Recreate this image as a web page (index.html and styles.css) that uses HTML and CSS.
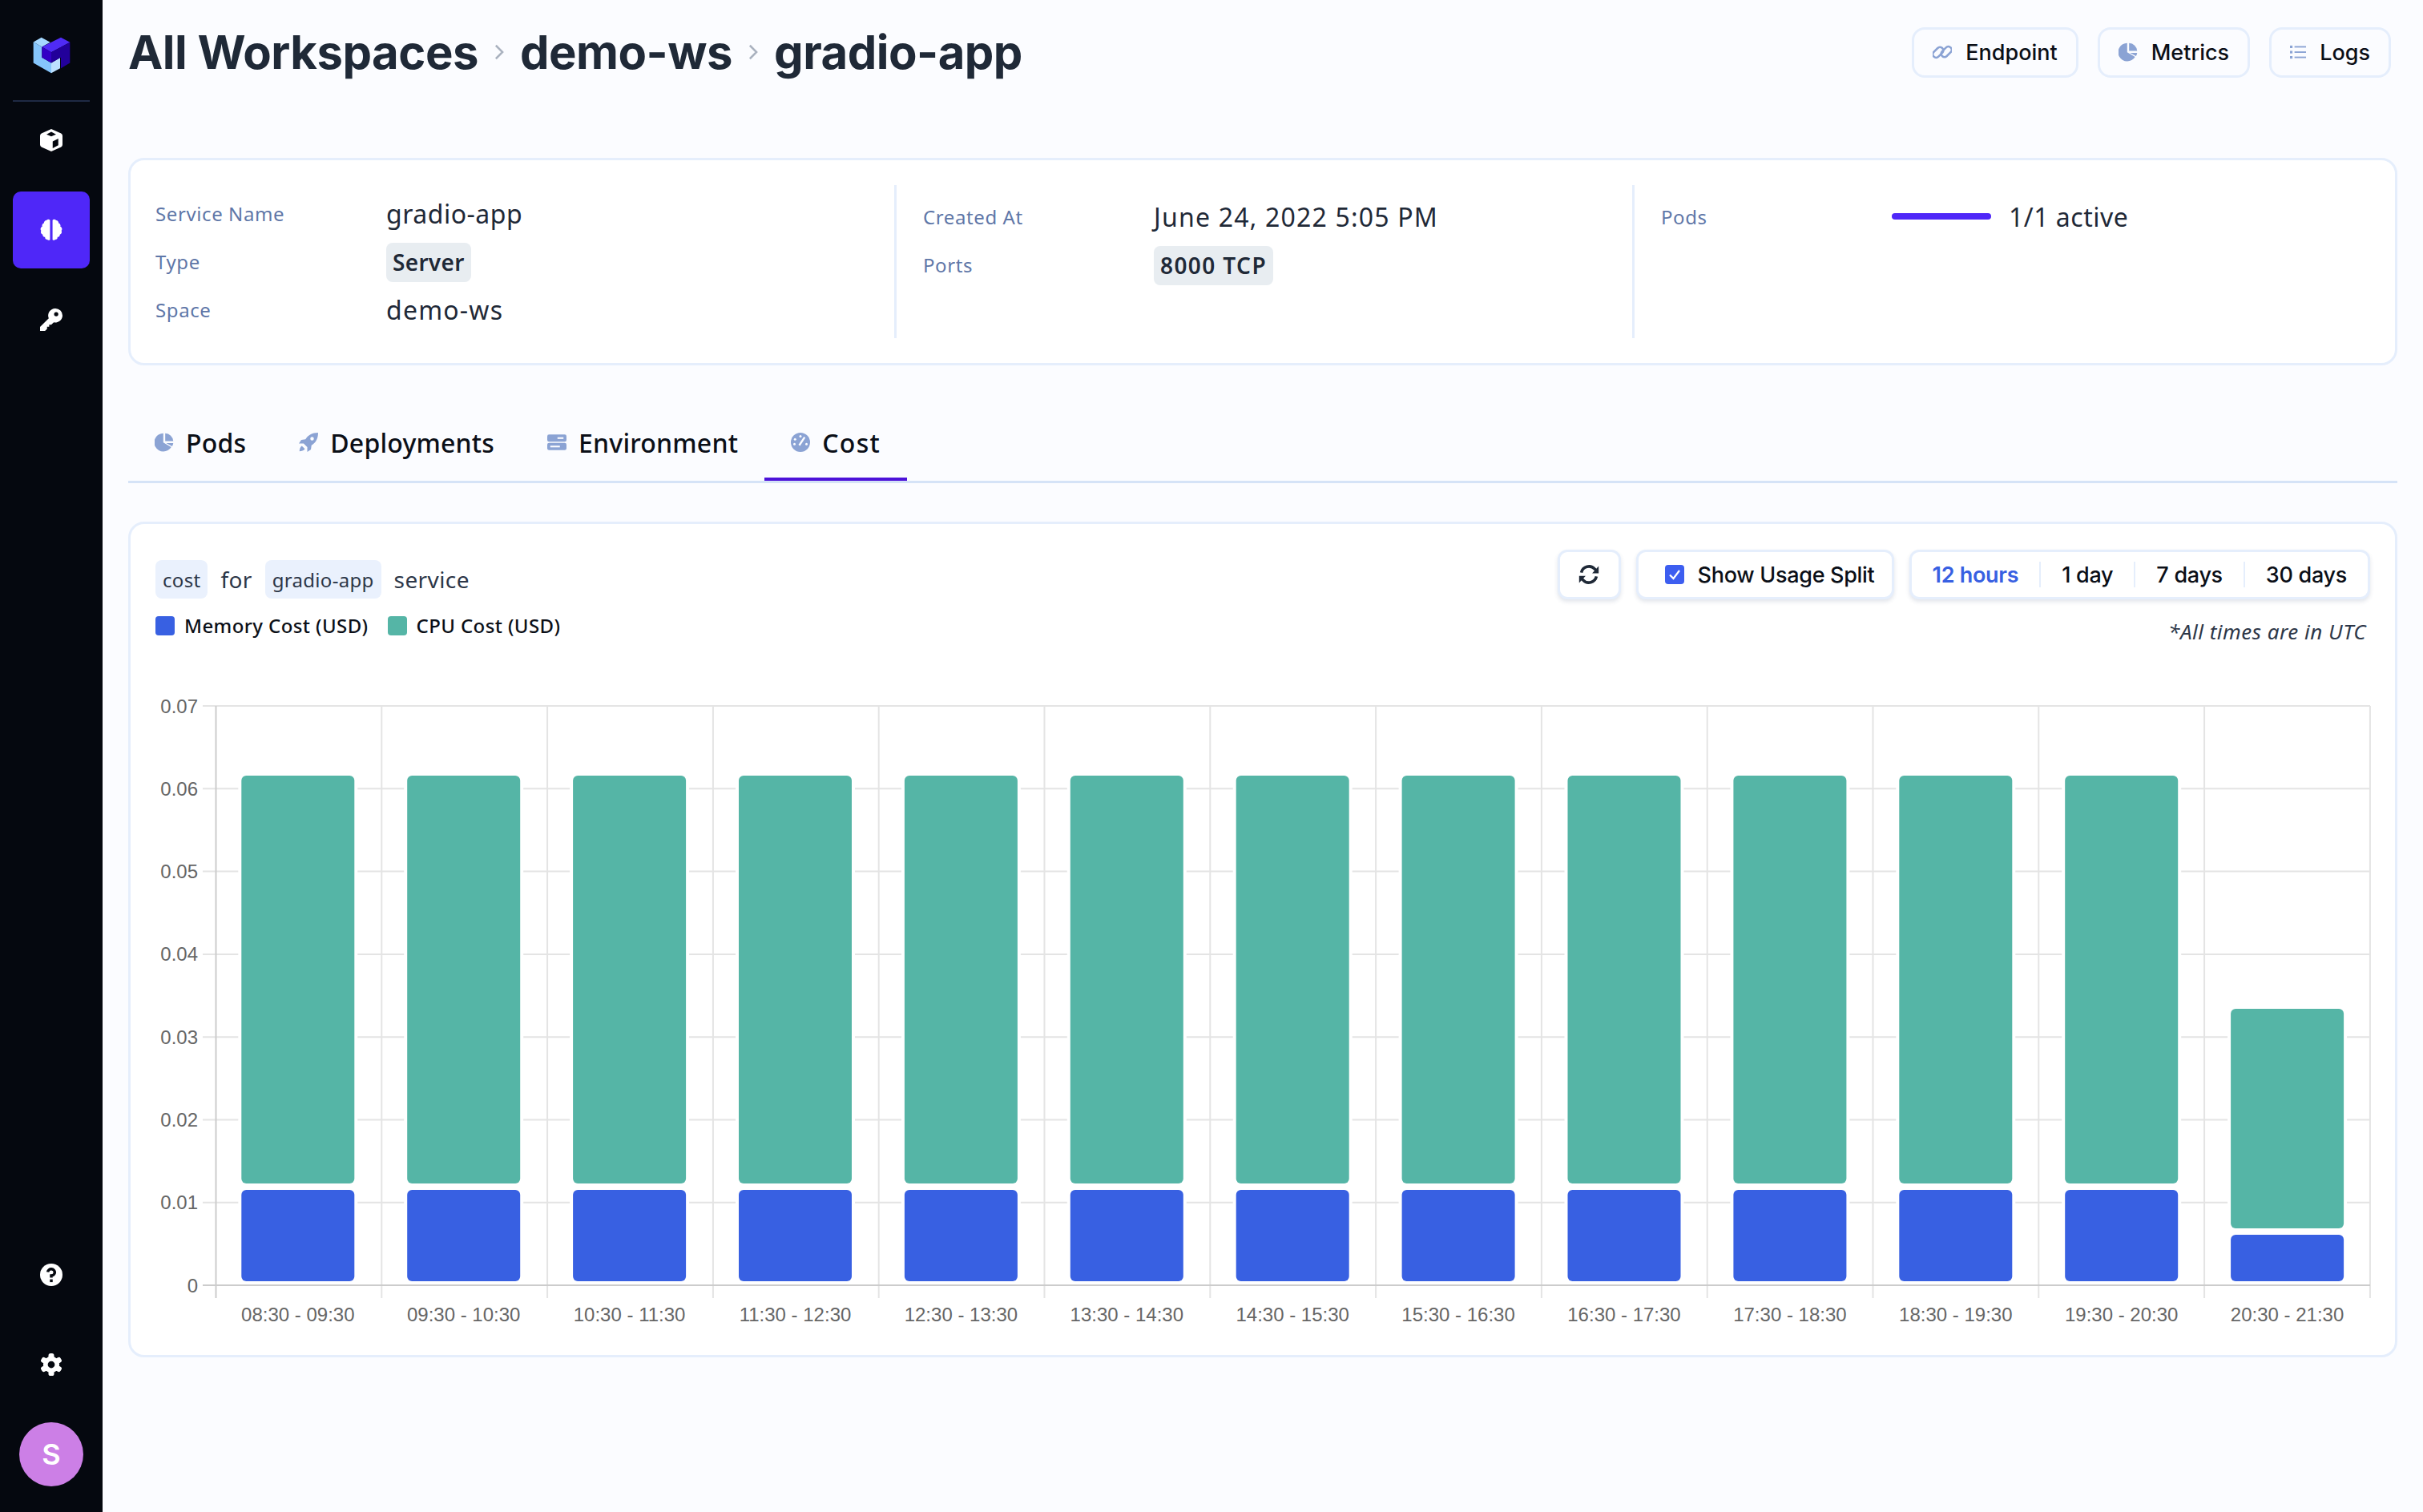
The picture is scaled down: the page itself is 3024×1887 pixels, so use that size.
FILE: index.html
```html
<!DOCTYPE html>
<html lang="en">
<head>
    <meta charset="UTF-8">
    <meta name="viewport" content="width=device-width, initial-scale=1.0">
    <title>gradio-app</title>
    <link rel="stylesheet" href="styles.css">
</head>
<body>
    <nav class="sidebar">
        <div class="logo">
            <svg viewBox="120 135 147 143" width="49" height="48">
                <polygon fill="#a5d8ff" points="125,157 155,140 188,158 157,175"/>
                <polygon fill="#85c5fb" points="125,157 157,175 157,215 192,235 192,273 125,235"/>
                <polygon fill="#bde0ff" points="192,235 225,215 225,255 192,273"/>
                <polygon fill="#4f2bf5" points="157,175 228,140 262,158 192,195"/>
                <polygon fill="#3300c5" points="157,175 192,195 192,235 157,215"/>
                <polygon fill="#22009a" points="192,195 262,158 262,235 228,255 228,215 192,235"/>
            </svg>
        </div>
        <a class="side-item">
            <svg viewBox="0 0 16 16" class="side-icon"><path fill="#fff" fill-rule="evenodd" d="M8 0 15 3.2Q16 3.700 16 4.800V11.200Q16 12.300 15 12.800L8 16 1 12.800Q0 12.300 0 11.200V4.800Q0 3.700 1 3.200ZM8 2 4.600 3.800 8 5.300 11.400 3.800ZM9 8.800V13.700L13 11.600V6.800Z"/></svg>
        </a>
        <a class="side-item active">
            <svg viewBox="0 0 16 16" class="side-icon">
                <path id="half" fill="#fff" d="M7.100 1A1.600 1.600 0 0 0 4.500 1.200 1.700 1.700 0 0 0 2.800 3.200 1.700 1.700 0 0 0 1.600 5.600 1.900 1.900 0 0 0 .8 8.600 1.800 1.800 0 0 0 1.800 11.200 1.700 1.700 0 0 0 3.600 13 1.600 1.600 0 0 0 5.200 14.800 1.400 1.400 0 0 0 7.100 15Z"/>
                <use href="#half" transform="matrix(-1 0 0 1 16 0)"/>
            </svg>
        </a>
        <a class="side-item">
            <svg viewBox="0 0 16 16" class="side-icon"><path fill="#fff" fill-rule="evenodd" d="M11 0A5 5 0 0 1 16 5 5 5 0 0 1 9.800 9.800L8 11.600H6.500V13H5V14.500L3.500 16H0V13.200L6.200 7A5 5 0 0 1 11 0ZM11.500 2.500A1.500 1.500 0 1 0 11.501 5.500 1.500 1.500 0 0 0 11.500 2.500Z"/></svg>
        </a>
        <div class="side-spacer"></div>
        <a class="side-item">
            <svg viewBox="0 0 16 16" class="side-icon">
                <circle cx="8" cy="8" r="8" fill="#fff"/>
                <path d="M5.500 6A2.500 2.300 0 1 1 8 8.500V10" fill="none" stroke="#05080f" stroke-width="2"/>
                <rect x="7" y="11.200" width="2" height="2" fill="#05080f"/>
            </svg>
        </a>
        <a class="side-item">
            <svg viewBox="0 0 16 16" class="side-icon">
                <g fill="#fff">
                    <circle cx="8" cy="8" r="5.800"/>
                    <rect x="6" y="0" width="4" height="16" rx="1.500"/>
                    <rect x="6" y="0" width="4" height="16" rx="1.500" transform="rotate(60 8 8)"/>
                    <rect x="6" y="0" width="4" height="16" rx="1.500" transform="rotate(120 8 8)"/>
                </g>
                <circle cx="8" cy="8" r="2.500" fill="#05080f"/>
            </svg>
        </a>
        <div class="avatar">S</div>
    </nav>

    <main class="main">
        <header class="topbar">
            <h1 class="crumbs">
                <span>All Workspaces</span>
                <svg class="chevron" viewBox="0 0 10 16"><path d="M2 2 8 8 2 14" fill="none" stroke="#aab2bf" stroke-width="1.800"/></svg>
                <span>demo-ws</span>
                <svg class="chevron" viewBox="0 0 10 16"><path d="M2 2 8 8 2 14" fill="none" stroke="#aab2bf" stroke-width="1.800"/></svg>
                <span>gradio-app</span>
            </h1>
            <div class="top-actions">
                <a class="top-btn">
                    <svg class="icon" viewBox="0 0 16 16"><g fill="none" stroke="#8ba3d4" stroke-width="1.700"><rect x="-.5" y="5.500" width="10" height="5.500" rx="2.700" transform="rotate(-45 4.500 8.200)"/><rect x="6.500" y="5" width="10" height="5.500" rx="2.700" transform="rotate(-45 11.500 7.800)"/></g></svg>
                    Endpoint
                </a>
                <a class="top-btn">
                    <svg class="icon" viewBox="0 0 16 16"><g fill="#8ba3d4"><path d="M7.200.5A7.600 7.600 0 1 0 13.800 12L7.200 8.200Z"/><path d="M8.800.5A7 7 0 0 1 15.500 7H8.800Z"/><path d="M9.600 8.600H15.500A7.500 7.500 0 0 1 14.600 11.300Z"/></g></svg>
                    Metrics
                </a>
                <a class="top-btn">
                    <svg class="icon icon-small" viewBox="0 0 16 16"><g fill="#8ba3d4"><rect x="0" y="1.500" width="2.500" height="2.500"/><rect x="0" y="6.800" width="2.500" height="2.500"/><rect x="0" y="12" width="2.500" height="2.500"/><rect x="4.500" y="2" width="11.500" height="1.500"/><rect x="4.500" y="7.300" width="11.500" height="1.500"/><rect x="4.500" y="12.500" width="11.500" height="1.500"/></g></svg>
                    Logs
                </a>
            </div>
        </header>

        <section class="card info-card">
            <div class="info-col first">
                <div class="info-row"><span class="info-label">Service Name</span><span class="info-value">gradio-app</span></div>
                <div class="info-row"><span class="info-label">Type</span><span class="chip">Server</span></div>
                <div class="info-row"><span class="info-label">Space</span><span class="info-value wide">demo-ws</span></div>
            </div>
            <div class="info-col">
                <div class="info-row"><span class="info-label">Created At</span><span class="info-value wide">June 24, 2022 5:05 PM</span></div>
                <div class="info-row"><span class="info-label">Ports</span><span class="chip ports">8000 TCP</span></div>
            </div>
            <div class="info-col">
                <div class="info-row"><span class="info-label">Pods</span><span class="pods-value"><span class="pods-bar"></span><span class="info-value">1/1 active</span></span></div>
            </div>
        </section>

        <div class="tabs">
            <a class="tab">
                <svg class="icon" viewBox="0 0 16 16"><g fill="#8ba3d4"><path d="M7.200.5A7.600 7.600 0 1 0 13.800 12L7.200 8.200Z"/><path d="M8.800.5A7 7 0 0 1 15.500 7H8.800Z"/><path d="M9.600 8.600H15.500A7.500 7.500 0 0 1 14.600 11.300Z"/></g></svg>
                Pods
            </a>
            <a class="tab">
                <svg class="icon" viewBox="0 0 16 16"><path fill="#8ba3d4" fill-rule="evenodd" d="M16 0C11 0 7.500 2.200 5.500 5.500L2 6 0 9H4L7 12V16L10 14 10.500 10.500C14 8.500 16 5 16 0ZM11 3.500A1.500 1.500 0 1 1 10.999 6.500 1.500 1.500 0 0 1 11 3.500ZM2.500 11 5 13.500C4 15 2 15.500 .5 15.500 .5 14 1 12 2.500 11Z"/></svg>
                Deployments
            </a>
            <a class="tab">
                <svg class="icon" viewBox="0 0 16 16"><g fill="#8ba3d4"><rect x="0" y="1.500" width="16" height="6" rx="1.500"/><rect x="0" y="8.500" width="16" height="6" rx="1.500"/></g><rect x="8.500" y="3.800" width="5" height="1.400" fill="#fbfcff"/><rect x="2.500" y="10.800" width="8" height="1.400" fill="#fbfcff"/></svg>
                Environment
            </a>
            <a class="tab current">
                <svg class="icon" viewBox="0 0 16 16"><circle cx="8" cy="8" r="8" fill="#8ba3d4"/><g fill="#fbfcff"><circle cx="8" cy="3" r="1"/><circle cx="3.500" cy="5.500" r="1"/><circle cx="3" cy="9.500" r="1"/><circle cx="13" cy="9.500" r="1"/></g><path d="M7 10.500 11.500 3.800" stroke="#fbfcff" stroke-width="1.600"/></svg>
                Cost
            </a>
        </div>

        <section class="card chart-card">
            <div class="chart-head">
                <div class="chart-title">
                    <div class="title-line"><span class="tag">cost</span><span>for</span><span class="tag">gradio-app</span><span>service</span></div>
                    <div class="legend">
                        <span class="legend-item"><span class="swatch mem"></span>Memory Cost (USD)</span>
                        <span class="legend-item"><span class="swatch cpu"></span>CPU Cost (USD)</span>
                    </div>
                </div>
                <div class="chart-tools">
                    <div class="tool-row">
                        <button class="tool refresh">
                            <svg viewBox="0 0 16 16" width="26" height="26"><g fill="none" stroke="#1f2937" stroke-width="2.200"><path d="M2.200 6.500A6 6 0 0 1 12.500 3.800L14.500 6"/><path d="M13.800 9.500A6 6 0 0 1 3.500 12.200L1.500 10"/></g><g fill="#1f2937"><polygon points="15.500,1.500 15.500,7 10.500,7"/><polygon points=".5,14.500 .5,9 5.500,9"/></g></svg>
                        </button>
                        <label class="tool split">
                            <span class="check"><svg viewBox="0 0 24 24" width="24" height="24"><path d="M6 12.500 10.500 17 18 7" fill="none" stroke="#fff" stroke-width="2.200"/></svg></span>
                            Show Usage Split
                        </label>
                        <div class="tool range">
                            <a class="range-item selected">12 hours</a>
                            <a class="range-item">1 day</a>
                            <a class="range-item">7 days</a>
                            <a class="range-item">30 days</a>
                        </div>
                    </div>
                    <div class="utc-note">*All times are in UTC</div>
                </div>
            </div>

            <svg class="chart" viewBox="194 860 2772 800" width="2772" height="800">
                <g class="grid">
                    <path d="M253 881H2958M253 984.300H2958M253 1087.600H2958M253 1190.900H2958M253 1294.200H2958M253 1397.500H2958M253 1500.800H2958"/>
                    <path d="M476.300 881V1620M683.100 881V1620M889.900 881V1620M1096.700 881V1620M1303.500 881V1620M1510.300 881V1620M1717.100 881V1620M1923.900 881V1620M2130.700 881V1620M2337.500 881V1620M2544.300 881V1620M2751.100 881V1620M2957.900 881V1620"/>
                </g>
                <path class="axis" d="M269.500 881V1620M253 1604H2958"/>

                <g class="bar cpu-bar">
                    <rect x="301.300" y="968" width="141" height="509" rx="6"/>
                    <rect x="508.200" y="968" width="141" height="509" rx="6"/>
                    <rect x="715.100" y="968" width="141" height="509" rx="6"/>
                    <rect x="922" y="968" width="141" height="509" rx="6"/>
                    <rect x="1128.900" y="968" width="141" height="509" rx="6"/>
                    <rect x="1335.800" y="968" width="141" height="509" rx="6"/>
                    <rect x="1542.700" y="968" width="141" height="509" rx="6"/>
                    <rect x="1749.600" y="968" width="141" height="509" rx="6"/>
                    <rect x="1956.500" y="968" width="141" height="509" rx="6"/>
                    <rect x="2163.400" y="968" width="141" height="509" rx="6"/>
                    <rect x="2370.300" y="968" width="141" height="509" rx="6"/>
                    <rect x="2577.200" y="968" width="141" height="509" rx="6"/>
                    <rect x="2784.100" y="1259" width="141" height="274" rx="6"/>
                </g>
                <g class="bar mem-bar">
                    <rect x="301.300" y="1485" width="141" height="114" rx="6"/>
                    <rect x="508.200" y="1485" width="141" height="114" rx="6"/>
                    <rect x="715.100" y="1485" width="141" height="114" rx="6"/>
                    <rect x="922" y="1485" width="141" height="114" rx="6"/>
                    <rect x="1128.900" y="1485" width="141" height="114" rx="6"/>
                    <rect x="1335.800" y="1485" width="141" height="114" rx="6"/>
                    <rect x="1542.700" y="1485" width="141" height="114" rx="6"/>
                    <rect x="1749.600" y="1485" width="141" height="114" rx="6"/>
                    <rect x="1956.500" y="1485" width="141" height="114" rx="6"/>
                    <rect x="2163.400" y="1485" width="141" height="114" rx="6"/>
                    <rect x="2370.300" y="1485" width="141" height="114" rx="6"/>
                    <rect x="2577.200" y="1485" width="141" height="114" rx="6"/>
                    <rect x="2784.100" y="1541" width="141" height="58" rx="6"/>
                </g>

                <g class="y-labels">
                    <text x="247" y="881">0.07</text>
                    <text x="247" y="984.300">0.06</text>
                    <text x="247" y="1087.600">0.05</text>
                    <text x="247" y="1190.900">0.04</text>
                    <text x="247" y="1294.200">0.03</text>
                    <text x="247" y="1397.500">0.02</text>
                    <text x="247" y="1500.800">0.01</text>
                    <text x="247" y="1604">0</text>
                </g>
                <g class="x-labels">
                    <text x="371.800" y="1640">08:30 - 09:30</text>
                    <text x="578.700" y="1640">09:30 - 10:30</text>
                    <text x="785.600" y="1640">10:30 - 11:30</text>
                    <text x="992.500" y="1640">11:30 - 12:30</text>
                    <text x="1199.400" y="1640">12:30 - 13:30</text>
                    <text x="1406.300" y="1640">13:30 - 14:30</text>
                    <text x="1613.200" y="1640">14:30 - 15:30</text>
                    <text x="1820.100" y="1640">15:30 - 16:30</text>
                    <text x="2027" y="1640">16:30 - 17:30</text>
                    <text x="2233.900" y="1640">17:30 - 18:30</text>
                    <text x="2440.800" y="1640">18:30 - 19:30</text>
                    <text x="2647.700" y="1640">19:30 - 20:30</text>
                    <text x="2854.600" y="1640">20:30 - 21:30</text>
                </g>
            </svg>
        </section>
    </main>
</body>
</html>
```

FILE: styles.css
```css
* {
    box-sizing: border-box;
}
body {
    margin: 0;
    display: flex;
    min-height: 1887px;
    background-color: #fbfcff;
    color: #1f2937;
    font-family: "Noto Sans", sans-serif;
}
a {
    color: inherit;
}

/* sidebar */
.sidebar {
    width: 128px;
    flex-shrink: 0;
    padding: 0 16px;
    background-color: #05080f;
    display: flex;
    flex-direction: column;
    align-items: center;
}
.logo {
    width: 96px;
    height: 127px;
    padding-top: 45px;
    display: flex;
    justify-content: center;
    align-items: flex-start;
    border-bottom: 2px solid #1f2a44;
}
.side-item {
    width: 96px;
    height: 96px;
    margin-top: 16px;
    display: flex;
    align-items: center;
    justify-content: center;
    border-radius: 10px;
}
.side-item.active {
    background-color: #4f27f8;
}
.side-icon {
    width: 28px;
    height: 28px;
}
.logo + .side-item {
    margin-top: 0;
}
.side-spacer {
    flex: 1;
}
.avatar {
    width: 80px;
    height: 80px;
    margin: 24px 0 32px;
    border-radius: 50%;
    background-color: #cc7fe6;
    color: #fff;
    font-family: Inter, sans-serif;
    font-size: 36px;
    font-weight: 600;
    display: flex;
    align-items: center;
    justify-content: center;
}

/* top */
.main {
    flex: 1;
    padding: 0 32px;
    min-width: 0;
}
.topbar {
    height: 130px;
    display: flex;
    align-items: center;
    justify-content: space-between;
}
.crumbs {
    margin: 0;
    display: flex;
    align-items: center;
    gap: 19px;
    font-family: Inter, sans-serif;
    font-size: 58px;
    font-weight: 700;
    letter-spacing: -0.5px;
    color: #1f2937;
}
.chevron {
    width: 14px;
    height: 22px;
}
.top-actions {
    display: flex;
    gap: 24px;
    margin-right: 8px;
}
.top-btn {
    height: 63px;
    padding: 0 23px;
    display: flex;
    align-items: center;
    gap: 17px;
    border: 3px solid #e5eefc;
    border-radius: 16px;
    font-family: Inter, sans-serif;
    font-size: 27px;
    font-weight: 500;
    color: #0b0f17;
}
.icon {
    width: 24px;
    height: 24px;
    flex-shrink: 0;
}
.icon-small {
    width: 20px;
    height: 20px;
}

/* cards */
.card {
    background-color: #fff;
    border: 3px solid #e5eefc;
    border-radius: 20px;
}
.info-card {
    margin-top: 67px;
    height: 259px;
    padding: 31px;
    display: grid;
    grid-template-columns: 922px 921px 1fr;
}
.info-col {
    padding: 9px 0 0 33px;
    border-left: 3px solid #e5eefc;
}
.info-col.first {
    padding: 5px 0 0;
    border-left: none;
}
.info-row {
    height: 60px;
    display: grid;
    grid-template-columns: 288px 1fr;
    align-items: center;
    justify-items: start;
}
.info-label {
    font-size: 24px;
    letter-spacing: 0.6px;
    color: #5f77a8;
}
.info-value {
    font-size: 32px;
    color: #1f2937;
    letter-spacing: 0.5px;
}
.info-value.wide {
    letter-spacing: 1.2px;
}
.chip {
    margin-top: 2px;
    padding: 0 8px;
    height: 49px;
    display: flex;
    align-items: center;
    background-color: #e8edf1;
    border-radius: 8px;
    font-size: 28px;
    font-weight: 600;
    letter-spacing: 0.3px;
    color: #1f2937;
}
.chip.ports {
    letter-spacing: 1.4px;
}
.pods-value {
    display: flex;
    align-items: center;
    gap: 22px;
}
.pods-bar {
    width: 124px;
    height: 8px;
    background-color: #4f27f8;
    border-radius: 4px;
}

/* tabs */
.tabs {
    margin-top: 45px;
    height: 102px;
    display: flex;
    align-items: stretch;
    border-bottom: 3px solid #d5e3f7;
}
.tab {
    padding: 7px 33px 0;
    display: flex;
    align-items: center;
    gap: 15px;
    font-size: 32px;
    font-weight: 500;
    letter-spacing: 0.2px;
    color: #0b0f17;
    border-bottom: 4px solid transparent;
}
.tab.current {
    letter-spacing: 1.3px;
    border-bottom-color: #4c12d9;
}

/* chart card */
.chart-card {
    margin-top: 48px;
    height: 1043px;
    padding: 30px 31px 0;
}
.chart-head {
    display: flex;
    justify-content: space-between;
    align-items: flex-start;
    height: 176px;
}
.chart-title {
    padding-top: 15px;
}
.title-line {
    display: flex;
    align-items: center;
    gap: 16px;
    font-size: 28px;
    letter-spacing: 0.4px;
    color: #2d3748;
}
.tag {
    height: 48px;
    padding: 0 9px;
    display: flex;
    align-items: center;
    background-color: #eaf1fd;
    border-radius: 8px;
    font-size: 24px;
    letter-spacing: 0.3px;
}
.legend {
    margin-top: 17px;
    display: flex;
    gap: 24px;
    font-size: 24px;
    font-weight: 500;
    letter-spacing: 0.4px;
    color: #0b0f17;
}
.legend-item {
    display: flex;
    align-items: center;
    gap: 12px;
}
.swatch {
    width: 24px;
    height: 24px;
    border-radius: 4px;
}
.swatch.mem {
    background-color: #3860e2;
}
.swatch.cpu {
    background-color: #55b5a6;
}
.chart-tools {
    display: flex;
    flex-direction: column;
    align-items: flex-end;
}
.tool-row {
    margin-top: 2px;
    display: flex;
    gap: 19px;
}
.tool {
    height: 62px;
    display: flex;
    align-items: center;
    background-color: #fff;
    border: 3px solid #e5eefc;
    border-radius: 12px;
    box-shadow: 0 3px 5px rgba(60, 80, 120, 0.15);
    font-family: Inter, sans-serif;
    font-size: 27px;
    font-weight: 500;
    letter-spacing: -0.3px;
    color: #0b0f17;
}
.refresh {
    width: 79px;
    justify-content: center;
    padding: 0;
}
.split {
    width: 322px;
    padding-left: 33px;
    gap: 17px;
    white-space: nowrap;
}
.check {
    width: 24px;
    height: 24px;
    border-radius: 4px;
    background-color: #3d5ef0;
    display: flex;
}
.range {
    padding: 0;
}
.range-item {
    height: 32px;
    padding: 0 26px;
    display: flex;
    align-items: center;
    white-space: nowrap;
    border-left: 2px solid #e5eefc;
}
.range-item:first-child {
    border-left: none;
}
.range-item.selected {
    color: #3860e2;
    font-weight: 600;
}
.utc-note {
    margin-top: 22px;
    margin-right: 5px;
    font-size: 26px;
    font-style: italic;
    letter-spacing: 0.5px;
    color: #2d3748;
}

/* chart */
.chart {
    display: block;
}
.grid path {
    fill: none;
    stroke: #e4e4e4;
    stroke-width: 2;
}
.axis {
    fill: none;
    stroke: #cccccc;
    stroke-width: 2;
}
.bar rect {
    stroke: #fff;
    stroke-width: 8;
    paint-order: stroke;
}
.cpu-bar rect {
    fill: #55b5a6;
}
.mem-bar rect {
    fill: #3860e2;
}
.chart text {
    font-family: "Liberation Sans", Arial, sans-serif;
    font-size: 24px;
    fill: #666666;
    dominant-baseline: central;
}
.y-labels text {
    text-anchor: end;
}
.x-labels text {
    text-anchor: middle;
}
```
